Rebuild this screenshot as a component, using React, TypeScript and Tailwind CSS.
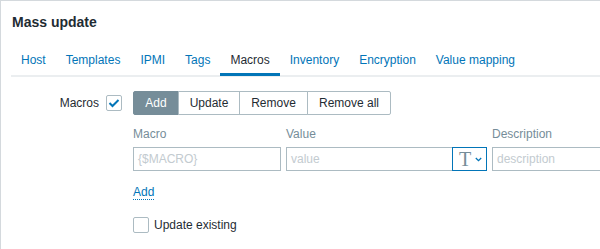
import React from "react";

const TABS = ["Host", "Templates", "IPMI", "Tags", "Macros", "Inventory", "Encryption", "Value mapping"];

const BUTTONS = [
  { label: "Add", w: "w-[46px]", active: true },
  { label: "Update", w: "w-[62px]", active: false },
  { label: "Remove", w: "w-[69px]", active: false },
  { label: "Remove all", w: "w-[84px]", active: false },
];

function Check({ checked }: { checked: boolean }) {
  return (
    <span className="flex h-[16px] w-[16px] items-center justify-center rounded-[2px] border border-[#acbbc2] bg-white">
      {checked && (
        <svg width="12" height="10" viewBox="0 0 12 10" fill="none">
          <path d="M1.5 5 L4.5 8 L10.5 2" stroke="#0275b8" strokeWidth="2" />
        </svg>
      )}
    </span>
  );
}

export default function App() {
  return (
    <div
      className="h-[249px] w-[600px] overflow-hidden border-l border-t border-[#d4d9dd] bg-white text-[12px] leading-[14px] text-[#1f2c33]"
      style={{ fontFamily: '"Liberation Sans", Arial, sans-serif' }}
    >
      {/* Title */}
      <div className="h-[43px] pl-[11px] pt-[12px] text-[14px] font-bold leading-[18px]">Mass update</div>

      {/* Tabs */}
      <div className="ml-[10px] flex border-b-2 border-[#ebeef0]">
        {TABS.map((t) => (
          <div
            key={t}
            className={
              t === "Macros"
                ? "-mb-[1px] border-b-[3px] border-[#0275b8] px-[10px] pb-[6px] pt-[9px] text-[#1f2c33]"
                : "-mb-[1px] border-b-[3px] border-transparent px-[10px] pb-[6px] pt-[9px] text-[#0275b8]"
            }
          >
            {t}
          </div>
        ))}
      </div>

      {/* Form */}
      <div className="mt-[14px] flex">
        <div className="flex h-[24px] w-[121px] shrink-0 items-center justify-end gap-[7px]">
          <span>Macros</span>
          <Check checked />
        </div>
        <div className="ml-[11px] flex flex-col">
          <div className="flex">
            {BUTTONS.map((b, i) => (
              <div
                key={b.label}
                className={[
                  "flex h-[24px] items-center justify-center border",
                  b.w,
                  i > 0 ? "-ml-px" : "",
                  i === 0 ? "rounded-l-[2px]" : "",
                  i === BUTTONS.length - 1 ? "rounded-r-[2px]" : "",
                  b.active ? "border-[#768d99] bg-[#768d99] text-white" : "border-[#acbbc2] bg-white text-[#1f2c33]",
                ].join(" ")}
              >
                {b.label}
              </div>
            ))}
          </div>

          <div className="mt-[12px] flex text-[#768d99]">
            <div className="w-[153px]">Macro</div>
            <div className="w-[206px]">Value</div>
            <div>Description</div>
          </div>

          <div className="mt-[6px] flex">
            <div className="flex h-[24px] w-[148px] items-center border border-[#acbbc2] pl-[4px] text-[#c3cbd0]">
              {"{$MACRO}"}
            </div>
            <div className="ml-[5px] flex">
              <div className="flex h-[24px] w-[167px] items-center border border-[#acbbc2] pl-[4px] text-[#c3cbd0]">
                value
              </div>
              <div className="-ml-px flex h-[24px] w-[35px] items-center gap-[4px] border border-[#0275b8] pl-[6px]">
                <span
                  className="text-[20px] leading-[20px] text-[#768d99]"
                  style={{ fontFamily: '"Liberation Serif", "Times New Roman", serif' }}
                >
                  T
                </span>
                <svg width="7" height="5" viewBox="0 0 7 5" fill="none">
                  <path d="M0.8 1 L3.5 3.7 L6.2 1" stroke="#0275b8" strokeWidth="1.3" />
                </svg>
              </div>
            </div>
            <div className="ml-[5px] flex h-[24px] w-[140px] items-center border border-[#acbbc2] pl-[4px] text-[#c3cbd0]">
              description
            </div>
          </div>

          <div className="mt-[14px]">
            <span className="inline-block border-b border-dotted border-[#0275b8] text-[#0275b8]">Add</span>
          </div>

          <div className="mt-[17px] flex items-center gap-[5px]">
            <Check checked={false} />
            <span>Update existing</span>
          </div>
        </div>
      </div>
    </div>
  );
}
